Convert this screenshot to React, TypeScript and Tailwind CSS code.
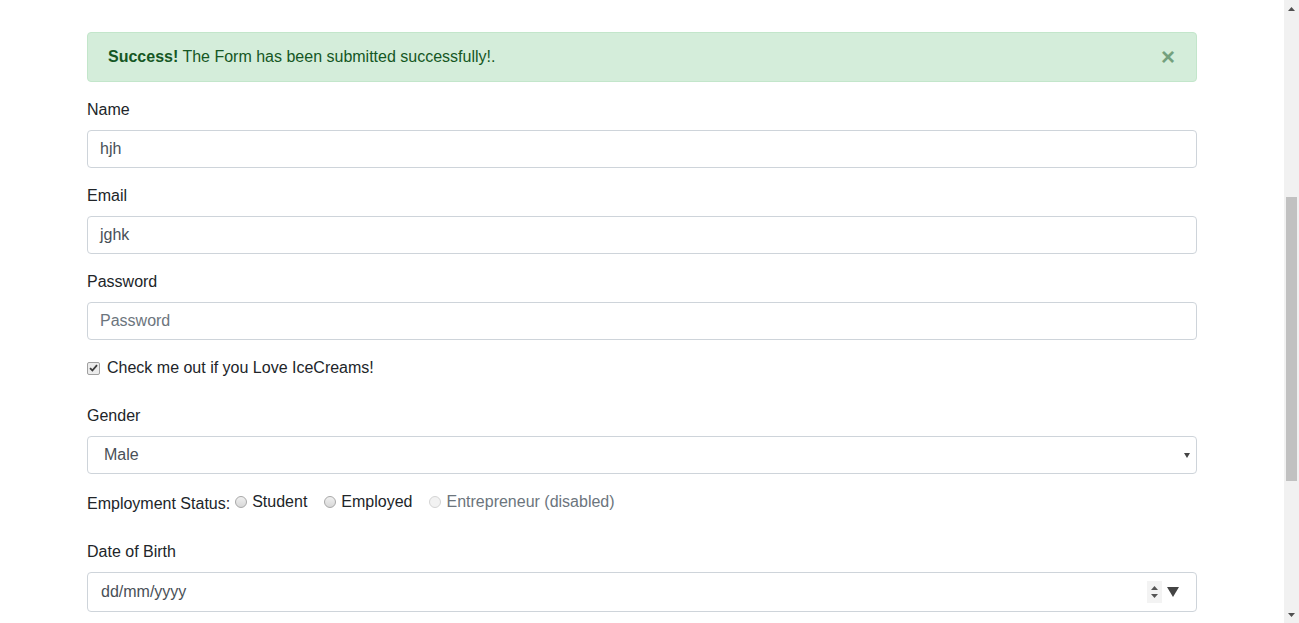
import React from "react";

const font = "font-['Liberation_Sans',Arial,sans-serif]";

function Field({ label, children }: { label: string; children: React.ReactNode }) {
  return (
    <div className="mb-4">
      <label className="mb-2 block leading-6">{label}</label>
      {children}
    </div>
  );
}

function TextBox({ value, placeholder }: { value?: string; placeholder?: string }) {
  return (
    <div className="flex h-[38px] items-center rounded border border-[#ced4da] bg-white px-3">
      {value ? (
        <span className="text-[#495057]">{value}</span>
      ) : (
        <span className="text-[#6c757d]">{placeholder}</span>
      )}
    </div>
  );
}

function Radio({ label, disabled }: { label: string; disabled?: boolean }) {
  return (
    <span className="mr-3 inline-flex items-center">
      <span
        className={
          "ml-[5px] mr-[5px] h-[12px] w-[12px] rounded-full border " +
          (disabled
            ? "border-[#d4d4d4] bg-[#f2f2f2]"
            : "border-[#a8a8a8] bg-gradient-to-b from-[#f0f0f0] to-[#d8d8d8]")
        }
      />
      <span className={disabled ? "text-[#6c757d]" : ""}>{label}</span>
    </span>
  );
}

function Scrollbar() {
  return (
    <div className="flex w-[15px] shrink-0 flex-col items-center bg-[#f1f1f1]">
      <div className="flex h-[17px] items-center">
        <svg width="7" height="4" viewBox="0 0 7 4">
          <path d="M0 4 L3.5 0 L7 4 Z" fill="#505050" />
        </svg>
      </div>
      <div className="mt-[180px] h-[284px] w-[11px] bg-[#c1c1c1]" />
      <div className="flex-1" />
      <div className="flex h-[17px] items-center">
        <svg width="7" height="4" viewBox="0 0 7 4">
          <path d="M0 0 L7 0 L3.5 4 Z" fill="#505050" />
        </svg>
      </div>
    </div>
  );
}

export default function App() {
  return (
    <div className={`flex h-[623px] w-[1299px] overflow-hidden bg-white text-base text-[#212529] ${font}`}>
      <div className="flex-1 overflow-hidden">
        <div className="mx-auto w-[1110px] pt-8">
          <div className="mb-4 flex h-[50px] items-center justify-between rounded border border-[#c3e6cb] bg-[#d4edda] pl-5 pr-[21px] text-[#155724]">
            <span>
              <strong className="font-bold">Success!</strong> The Form has been submitted successfully!.
            </span>
            <span className="text-2xl font-bold leading-none text-[#155724] opacity-50">×</span>
          </div>

          <Field label="Name">
            <TextBox value="hjh" />
          </Field>
          <Field label="Email">
            <TextBox value="jghk" />
          </Field>
          <Field label="Password">
            <TextBox placeholder="Password" />
          </Field>

          <div className="mb-6 flex items-center leading-6">
            <span className="mr-[7px] flex h-[13px] w-[13px] items-center justify-center rounded-[2px] border border-[#a0a0a0] bg-[#ececec]">
              <svg width="9" height="8" viewBox="0 0 9 8">
                <path d="M1 4.2 L3.4 6.5 L8 1.2" fill="none" stroke="#3c3c3c" strokeWidth="1.8" />
              </svg>
            </span>
            <span>Check me out if you Love IceCreams!</span>
          </div>

          <Field label="Gender">
            <div className="flex h-[38px] items-center justify-between rounded border border-[#ced4da] bg-white pl-4 pr-[6px]">
              <span className="text-[#495057]">Male</span>
              <svg width="6" height="5" viewBox="0 0 6 5">
                <path d="M0 0 L6 0 L3 5 Z" fill="#444" />
              </svg>
            </div>
          </Field>

          <div className="mb-6 flex items-start leading-6">
            <span className="mt-[2px]">Employment Status:</span>
            <Radio label="Student" />
            <Radio label="Employed" />
            <Radio label="Entrepreneur (disabled)" disabled />
          </div>

          <Field label="Date of Birth">
            <div className="flex h-[40px] items-center justify-between rounded border border-[#ced4da] bg-white pl-[13px] pr-[17px]">
              <span className="text-[#495057]">dd/mm/yyyy</span>
              <div className="flex items-center gap-[5px]">
                <div className="flex h-[22px] w-[15px] flex-col items-center justify-center gap-[4px] bg-[#f3f3f3]">
                  <svg width="7" height="4" viewBox="0 0 7 4">
                    <path d="M0 4 L3.5 0 L7 4 Z" fill="#555" />
                  </svg>
                  <svg width="7" height="4" viewBox="0 0 7 4">
                    <path d="M0 0 L7 0 L3.5 4 Z" fill="#555" />
                  </svg>
                </div>
                <svg width="12" height="10" viewBox="0 0 12 10">
                  <path d="M0 0 L12 0 L6 10 Z" fill="#444" />
                </svg>
              </div>
            </div>
          </Field>
        </div>
      </div>
      <Scrollbar />
    </div>
  );
}
